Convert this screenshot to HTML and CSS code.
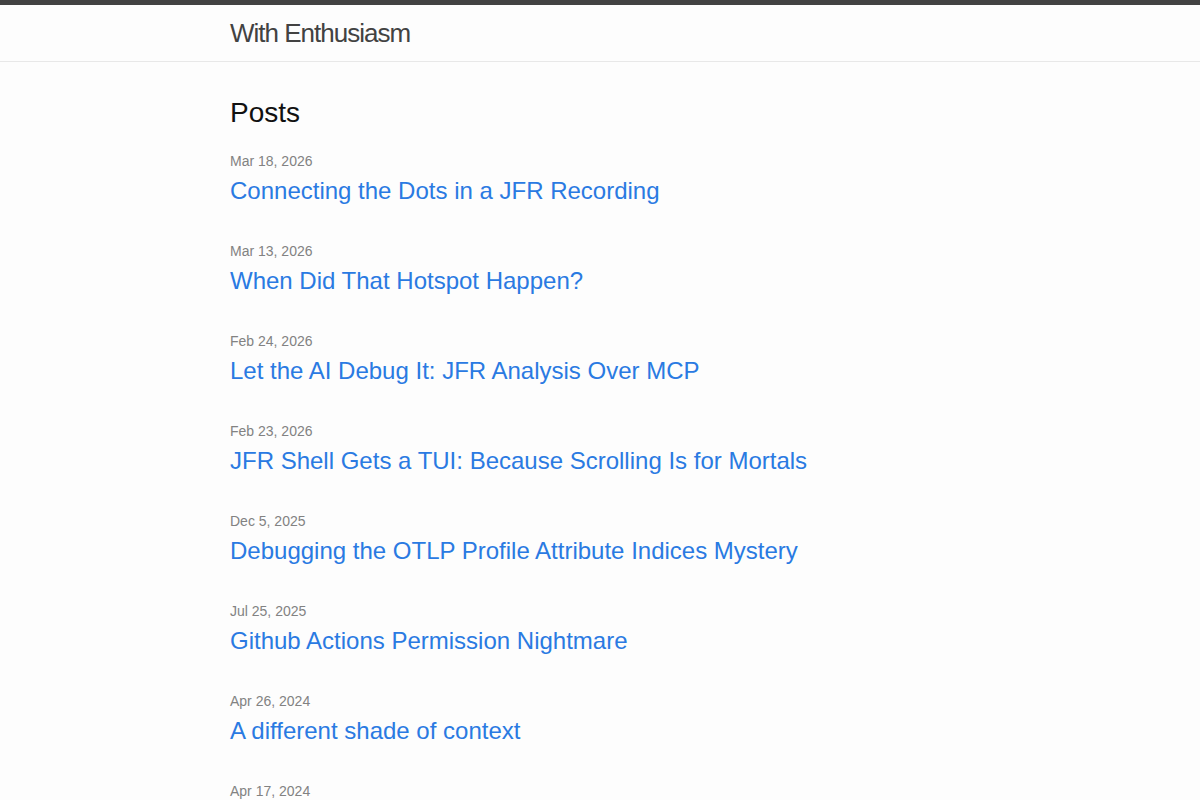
FILE: index.html
```html
<!DOCTYPE html>
<html lang="en">

    <head>
        <meta charset="UTF-8">
        <meta name="viewport" content="width=device-width, initial-scale=1.0">
        <title>With Enthusiasm</title>
        <link rel="stylesheet" href="styles.css">
    </head>

    <body>
        <header class="site-header">
            <div class="wrapper">
                <a class="site-title" href="#">With Enthusiasm</a>
            </div>
        </header>

        <main class="page-content">
            <div class="wrapper">
                <h1 class="page-heading">Posts</h1>
                <ul class="post-list">
                    <li>
                        <span class="post-meta">Mar 18, 2026</span>
                        <a class="post-link" href="#">Connecting the Dots in a JFR Recording</a>
                    </li>
                    <li>
                        <span class="post-meta">Mar 13, 2026</span>
                        <a class="post-link" href="#">When Did That Hotspot Happen?</a>
                    </li>
                    <li>
                        <span class="post-meta">Feb 24, 2026</span>
                        <a class="post-link" href="#">Let the AI Debug It: JFR Analysis Over MCP</a>
                    </li>
                    <li>
                        <span class="post-meta">Feb 23, 2026</span>
                        <a class="post-link" href="#">JFR Shell Gets a TUI: Because Scrolling Is for Mortals</a>
                    </li>
                    <li>
                        <span class="post-meta">Dec 5, 2025</span>
                        <a class="post-link" href="#">Debugging the OTLP Profile Attribute Indices Mystery</a>
                    </li>
                    <li>
                        <span class="post-meta">Jul 25, 2025</span>
                        <a class="post-link" href="#">Github Actions Permission Nightmare</a>
                    </li>
                    <li>
                        <span class="post-meta">Apr 26, 2024</span>
                        <a class="post-link" href="#">A different shade of context</a>
                    </li>
                    <li>
                        <span class="post-meta">Apr 17, 2024</span>
                        <a class="post-link" href="#">Announcing the JFR Shell</a>
                    </li>
                </ul>
            </div>
        </main>
    </body>

</html>
```

FILE: styles.css
```css
body {
    font-family: "Liberation Sans", Arial, sans-serif;
    margin: 0;
    padding: 0;
    background-color: #fdfdfd;
    color: #111;
}

a {
    text-decoration: none;
}

.wrapper {
    max-width: 740px;
    margin: 0 auto;
}

.site-header {
    border-top: 5px solid #424242;
    border-bottom: 1px solid #e8e8e8;
    height: 56px;
}

.site-title {
    display: block;
    font-size: 26px;
    line-height: 56px;
    letter-spacing: -1px;
    color: #424242;
}

.page-content {
    padding-top: 34px;
}

.page-heading {
    font-size: 28px;
    font-weight: normal;
    line-height: 34px;
    margin: 0 0 21px 0;
}

.post-list {
    list-style: none;
    margin: 0;
    padding: 0;
}

.post-list li {
    margin-bottom: 35px;
}

.post-meta {
    display: block;
    font-size: 14px;
    line-height: 20px;
    color: #828282;
}

.post-link {
    display: block;
    margin-top: 5px;
    font-size: 24px;
    line-height: 30px;
    color: #2a7ae2;
}
```
